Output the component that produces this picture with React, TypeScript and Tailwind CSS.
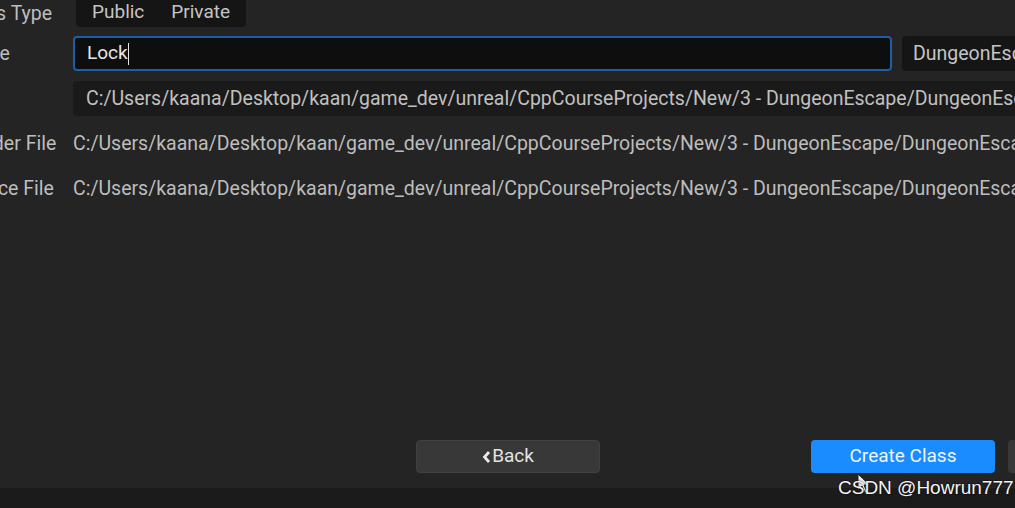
const path =
  "C:/Users/kaana/Desktop/kaan/game_dev/unreal/CppCourseProjects/New/3 - DungeonEscape/DungeonEscape/Source/DungeonEscape/Lock.h";

const Label = ({ text }: { text: string }) => (
  <div className="w-[115px] shrink-0 -ml-[42px] text-[19.5px] text-[#bdbdbd] whitespace-nowrap">
    {text}
  </div>
);

export default function App() {
  return (
    <div
      className="relative w-[1015px] h-[508px] overflow-hidden bg-[#242424] flex flex-col"
      style={{ fontFamily: "Roboto, 'Liberation Sans', sans-serif" }}
    >
      <div className="flex-1 flex flex-col">
        <div className="flex items-center h-[27px]">
          <Label text="Class Type" />
          <div className="ml-[3px] h-[27px] shrink-0 flex items-center pb-[3px] gap-[27px] px-[16px] bg-[#151515] rounded-b-[4px] text-[19px] leading-[22px] text-[#c4c4c4]">
            <span>Public</span>
            <span>Private</span>
          </div>
        </div>

        <div className="flex items-center mt-[9px] h-[35px]">
          <Label text="Name" />
          <div className="w-[819px] h-[35px] shrink-0 flex items-center px-[12px] bg-[#0e0e0e] border-2 border-[#1d5ea6] rounded-[4px] text-[19px] text-[#e6e6e6]">
            Lock<span className="inline-block w-px h-[22px] bg-[#e6e6e6]" />
          </div>
          <div className="ml-[10px] h-[35px] w-[140px] shrink-0 flex items-center px-[11px] bg-[#151515] rounded-[4px] text-[19.5px] text-[#c4c4c4] whitespace-nowrap">
            DungeonEscape
          </div>
        </div>

        <div className="flex items-center mt-[10px] h-[35px]">
          <Label text="Path" />
          <div className="w-[980px] h-[35px] shrink-0 flex items-center px-[13px] bg-[#1a1a1a] rounded-[4px] text-[19.5px] text-[#c0c0c0] whitespace-nowrap">
            {path}
          </div>
        </div>

        <div className="flex items-center mt-[15px] h-[26px]">
          <Label text="Header File" />
          <div className="text-[19.5px] text-[#bdbdbd] whitespace-nowrap">{path}</div>
        </div>

        <div className="flex items-center mt-[19px] h-[26px]">
          <Label text="Source File" />
          <div className="text-[19.5px] text-[#bdbdbd] whitespace-nowrap">
            {path.replace("Lock.h", "Lock.cpp")}
          </div>
        </div>

        <div className="mt-auto mb-[15px] flex items-center h-[33px]">
          <div className="ml-[416px] w-[184px] h-[33px] shrink-0 flex items-center justify-center bg-[#383838] border border-[#414141] rounded-[4px] text-[19px] text-[#e4e4e4]">
            <svg width="9" height="14" viewBox="0 0 9 14" className="mr-[1px]">
              <path d="M7 2 L2.5 7 L7 12" fill="none" stroke="#ececec" strokeWidth="2.8" />
            </svg>
            Back
          </div>
          <div className="ml-[211px] w-[184px] h-[33px] shrink-0 flex items-center justify-center bg-[#1a8cff] rounded-[4px] text-[19px] text-[#eef5ff]">
            Create Class
          </div>
          <div className="ml-[13px] w-[60px] h-[33px] shrink-0 bg-[#383838] rounded-[4px]" />
        </div>
      </div>
      <div className="h-[20px] bg-[#1b1b1b]" />

      <svg className="absolute left-[857px] top-[473px]" width="14" height="21" viewBox="0 0 14 21">
        <path d="M1 1 L1 17 L5 13 L8 20 L10 19 L7 12 L12.5 12 Z" fill="#f2f2f2" stroke="#222" strokeWidth="1" />
      </svg>
      <div
        className="absolute left-[838px] top-[476px] text-[19px] leading-[24px] text-[#f4f4f4] whitespace-nowrap"
        style={{ fontFamily: "'Liberation Sans', sans-serif", textShadow: "0 0 2px #000" }}
      >
        CSDN @Howrun777
      </div>
    </div>
  );
}
